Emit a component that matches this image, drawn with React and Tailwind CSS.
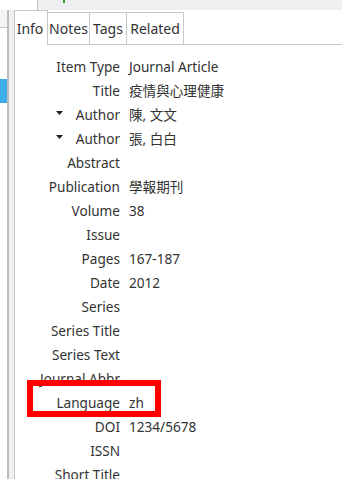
import React from "react";

const rows = [
  ["Item Type", "Journal Article"],
  ["Title", "疫情與心理健康"],
  ["Author", "陳, 文文", true],
  ["Author", "張, 白白", true],
  ["Abstract", ""],
  ["Publication", "學報期刊"],
  ["Volume", "38"],
  ["Issue", ""],
  ["Pages", "167-187"],
  ["Date", "2012"],
  ["Series", ""],
  ["Series Title", ""],
  ["Series Text", ""],
  ["Journal Abbr", ""],
  ["Language", "zh"],
  ["DOI", "1234/5678"],
  ["ISSN", ""],
  ["Short Title", ""],
];

export default function App() {
  return (
    <div
      className="relative w-[342px] h-[479px] overflow-hidden bg-white text-[#333] flex flex-col"
      style={{ fontFamily: '"Noto Sans", "Noto Sans CJK TC", sans-serif' }}
    >
      {/* top strip */}
      <div className="flex h-[10px] shrink-0">
        <div className="w-[38px] bg-white border-r border-[#c4c4c4]" />
        <div className="flex-1 bg-[#eeeff1]" />
      </div>
      <div className="absolute left-[63px] top-0 w-[2px] h-[3px] bg-[#2e9b2e]" />

      <div className="flex flex-1 min-h-0">
        {/* left panel sliver */}
        <div className="w-[7px] flex flex-col">
          <div className="h-[18px] bg-[#f3f3f3] border-b border-[#c8c8c8]" />
          <div className="h-[51px]" />
          <div className="h-[24px] bg-[#3daee9]" />
        </div>
        {/* splitter */}
        <div className="w-[8px] bg-[#eff0f1] border-l-2 border-l-[#bcbcbc] border-r border-r-[#c4c4c4]" />

        {/* right pane */}
        <div className="flex-1 flex flex-col">
          <div className="flex h-[35px] text-[14px]">
            <div className="w-[33px] h-[35px] border-t border-r border-[#c8c8c8] bg-white flex items-center justify-center pt-[1px] pr-[2px]">
              Info
            </div>
            <div className="flex flex-1 border-b border-[#c8c8c8] pt-[2px]">
              <div className="w-[42px] border-t border-r border-[#c8c8c8] flex items-center justify-center">Notes</div>
              <div className="w-[37px] border-t border-r border-[#c8c8c8] flex items-center justify-center">Tags</div>
              <div className="w-[57px] border-t border-r border-[#c8c8c8] flex items-center justify-center">Related</div>
            </div>
          </div>

          <div className="pt-[10px] grid grid-cols-[105px_1fr] gap-x-[9px] text-[13.6px]">
            {rows.map(([label, value, tri], i) => (
              <React.Fragment key={i}>
                <div className="h-[24px] flex items-center justify-end">
                  {tri && (
                    <svg width="7" height="4" viewBox="0 0 7 4" className="mr-auto ml-[41px] mb-[4px]">
                      <polygon points="0,0 7,0 3.5,4" fill="#222" />
                    </svg>
                  )}
                  <span className="whitespace-nowrap">{label}</span>
                </div>
                <div className="h-[24px] flex items-center whitespace-nowrap">{value}</div>
              </React.Fragment>
            ))}
          </div>
        </div>
      </div>

      <div className="absolute left-[27px] top-[380px] w-[134px] h-[37px] border-[6px] border-[#ff0000]" />
    </div>
  );
}
